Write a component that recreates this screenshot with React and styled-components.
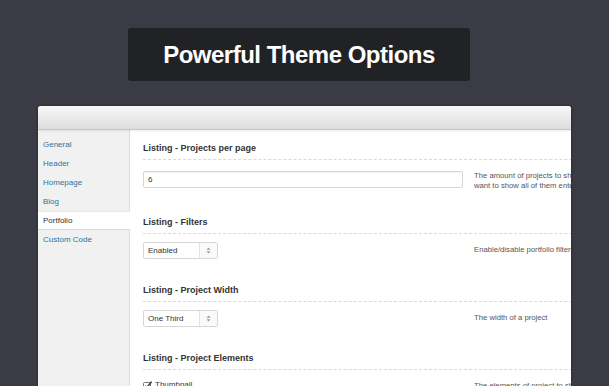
import React from 'react';
import styled, { createGlobalStyle } from 'styled-components';

const GlobalStyle = createGlobalStyle`
  body {
    margin: 0;
    background: #3a3b44;
    overflow: hidden;
    font-family: "Liberation Sans", Arial, Helvetica, sans-serif;
  }
`;

const Page = styled.div`
  padding-top: 28px;
`;

const TitleBox = styled.div`
  margin-left: 128px;
  width: 342px;
  height: 53px;
  background: #212226;
  border-radius: 3px;
  display: flex;
  align-items: center;
  justify-content: center;
  color: #fff;
  font-size: 24px;
  font-weight: bold;
  letter-spacing: -0.5px;
`;

const Panel = styled.div`
  margin: 25px 0 0 38px;
  width: 533px;
  height: 280px;
  background: #fff;
  border-radius: 3px 3px 0 0;
  overflow: hidden;
  display: flex;
  flex-direction: column;
  box-shadow: 0 0 3px rgba(0, 0, 0, 0.45);
`;

const PanelHeader = styled.div`
  height: 23px;
  flex: none;
  background: linear-gradient(#f8f8f8, #dddddd);
  border-bottom: 1px solid #c6c6c6;
  position: relative;
  z-index: 1;
  box-shadow: 0 1px 2px rgba(0, 0, 0, 0.08);
`;

const PanelBody = styled.div`
  display: flex;
  flex: 1;
  min-height: 0;
`;

const Sidebar = styled.div`
  width: 91px;
  flex: none;
  background: #f1f1f1;
  border-right: 1px solid #dcdcdc;
  padding-top: 5px;
`;

const NavItem = styled.div`
  height: 17px;
  line-height: 17px;
  padding-left: 5px;
  font-size: 8px;
  color: ${p => (p.$active ? '#333' : '#2f72a0')};
  background: ${p => (p.$active ? '#fff' : 'transparent')};
  border-top: 1px solid ${p => (p.$active ? '#e6e6e6' : 'transparent')};
  border-bottom: 1px solid ${p => (p.$active ? '#dadada' : 'transparent')};
  margin-right: ${p => (p.$active ? '-1px' : '0')};
`;

const Content = styled.div`
  flex: none;
  width: 620px;
  padding: 11px 0 0 13px;
`;

const Section = styled.div`
  margin-bottom: 24px;
`;

const SectionTitle = styled.div`
  font-size: 9px;
  font-weight: bold;
  color: #333;
  line-height: 14px;
  padding-bottom: 4px;
  border-bottom: 1px dashed #d9d9d9;
  margin-bottom: 8px;
`;

const Row = styled.div`
  display: flex;
  align-items: flex-start;
  gap: 11px;
`;

const Field = styled.div`
  width: 320px;
  flex: none;
`;

const Desc = styled.div`
  font-size: 7.7px;
  line-height: 10px;
  color: #555;
  padding-top: 3px;
  white-space: nowrap;
`;

const TextInput = styled.input`
  box-sizing: border-box;
  width: 320px;
  height: 17px;
  margin: 0;
  padding: 0 4px;
  border: 1px solid #d6d6d6;
  border-radius: 2px;
  box-shadow: inset 0 1px 1px rgba(0, 0, 0, 0.05);
  font-family: inherit;
  font-size: 8px;
  color: #333;
  outline: none;
`;

const Select = styled.div`
  box-sizing: border-box;
  display: flex;
  width: 75px;
  height: 17px;
  border: 1px solid #d6d6d6;
  border-radius: 2px;
  background: #fff;
  font-size: 8px;
  color: #333;
`;

const SelectText = styled.div`
  flex: 1;
  padding-left: 4px;
  line-height: 15px;
`;

const SelectArrow = styled.div`
  width: 17px;
  border-left: 1px solid #e3e3e3;
  background: #fafafa;
  display: flex;
  align-items: center;
  justify-content: center;
`;

const CheckRow = styled.div`
  display: flex;
  align-items: center;
  gap: 3px;
  font-size: 8px;
  color: #333;
  line-height: 10px;
  padding-top: 2px;
`;

const Arrows = () => (
  <svg width="5" height="7" viewBox="0 0 5 7">
    <path d="M2.5 0.5 L4.5 2.8 L0.5 2.8 Z M2.5 6.5 L4.5 4.2 L0.5 4.2 Z" fill="#999" />
  </svg>
);

const CheckIcon = () => (
  <svg width="9" height="9" viewBox="0 0 9 9">
    <rect x="0.5" y="1.5" width="7" height="7" rx="1" fill="#fff" stroke="#777" />
    <path d="M2 4.8 L3.8 6.6 L8.6 0.6" fill="none" stroke="#2a4f7a" strokeWidth="1.6" />
  </svg>
);

const SelectBox = ({ value }) => (
  <Select>
    <SelectText>{value}</SelectText>
    <SelectArrow><Arrows /></SelectArrow>
  </Select>
);

const navItems = ['General', 'Header', 'Homepage', 'Blog', 'Portfolio', 'Custom Code'];

export default function App() {
  return (
    <Page>
      <GlobalStyle />
      <TitleBox>Powerful Theme Options</TitleBox>
      <Panel>
        <PanelHeader />
        <PanelBody>
          <Sidebar>
            {navItems.map(item => (
              <NavItem key={item} $active={item === 'Portfolio'}>{item}</NavItem>
            ))}
          </Sidebar>
          <Content>
            <Section>
              <SectionTitle>Listing - Projects per page</SectionTitle>
              <Row>
                <Field><TextInput readOnly value="6" /></Field>
                <Desc>
                  The amount of projects to show per page. If you<br />
                  want to show all of them enter -1.
                </Desc>
              </Row>
            </Section>
            <Section>
              <SectionTitle>Listing - Filters</SectionTitle>
              <Row>
                <Field><SelectBox value="Enabled" /></Field>
                <Desc>Enable/disable portfolio filters.</Desc>
              </Row>
            </Section>
            <Section>
              <SectionTitle>Listing - Project Width</SectionTitle>
              <Row>
                <Field><SelectBox value="One Third" /></Field>
                <Desc>The width of a project</Desc>
              </Row>
            </Section>
            <Section>
              <SectionTitle>Listing - Project Elements</SectionTitle>
              <Row>
                <Field>
                  <CheckRow><CheckIcon />Thumbnail</CheckRow>
                </Field>
                <Desc>The elements of project to show.</Desc>
              </Row>
            </Section>
          </Content>
        </PanelBody>
      </Panel>
    </Page>
  );
}
